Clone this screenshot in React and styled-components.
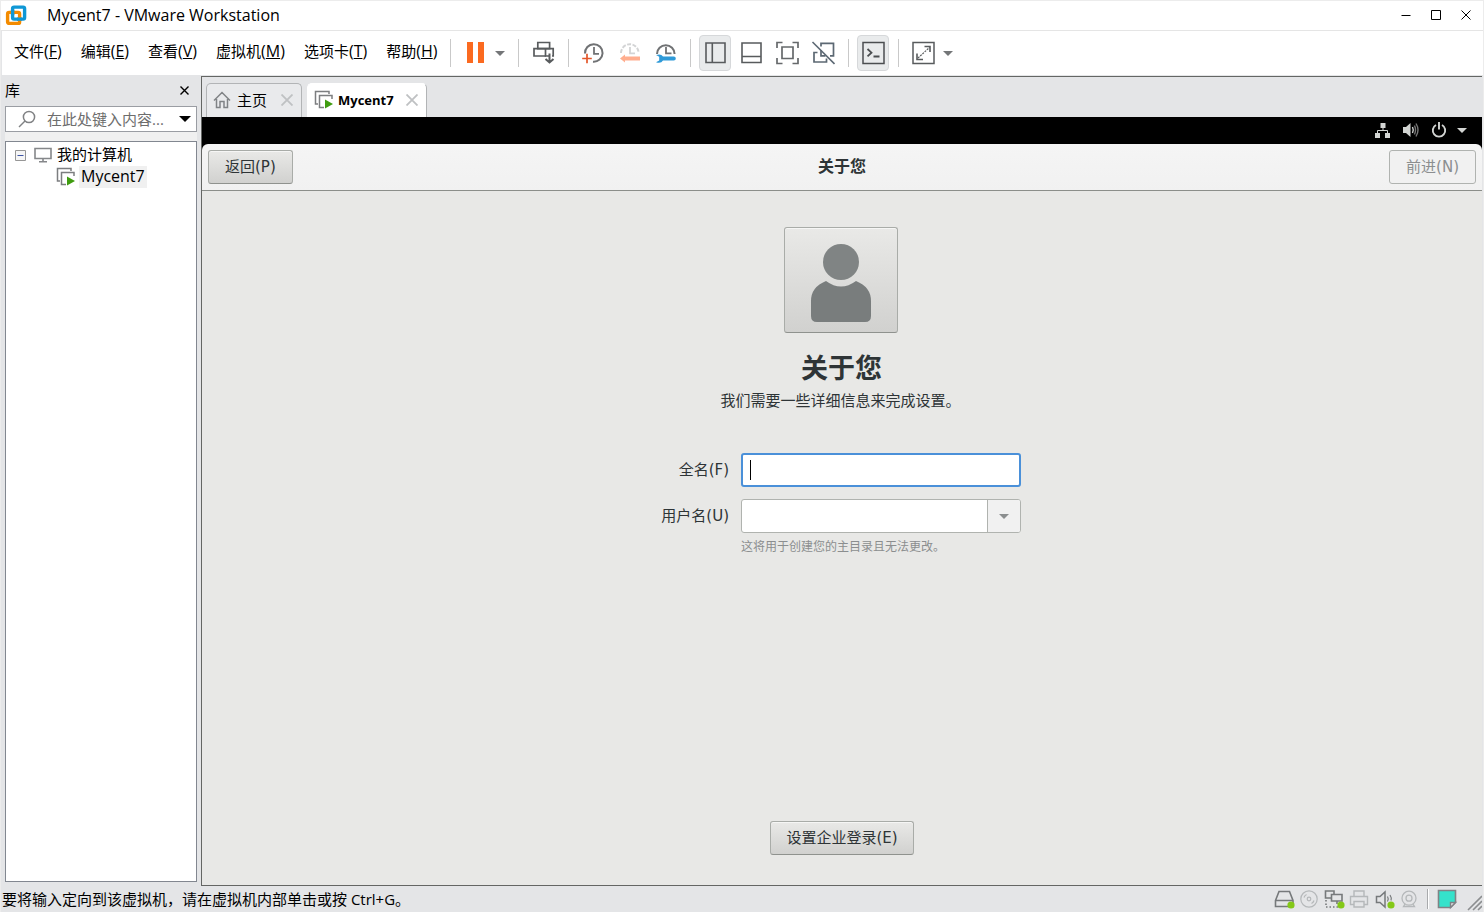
import React from "react";
import styled, { createGlobalStyle } from "styled-components";

const GlobalStyle = createGlobalStyle`
  *, *::before, *::after { box-sizing: border-box; }
  html, body, #root { height: 100%; margin: 0; }
  body {
    background: #e4e5e7;
    color: #000;
    font-family: "Open Sans", "Noto Sans CJK SC", sans-serif;
    font-size: 15px;
    line-height: 20px;
    overflow: hidden;
  }
  button, input { font: inherit; color: inherit; margin: 0; }
  svg { display: block; flex: none; }
`;

const Window = styled.div`
  min-height: 100vh;
  display: flex;
  flex-direction: column;
  border: 1px solid #ececec;
  border-width: 1px 1px 0 1px;
`;

const TitleBar = styled.header`
  display: flex;
  align-items: center;
  height: 30px;
  padding: 0 2px 2px 4px;
  background: #fff;
  border-bottom: 1px solid #e5e5e5;
`;

const WindowTitle = styled.h1`
  flex: 1;
  margin: 0 0 0 20px;
  font-size: 16px;
  font-weight: 400;
`;

const PlainButton = styled.button`
  display: flex;
  align-items: center;
  justify-content: center;
  flex: none;
  padding: 0;
  border: 0;
  background: transparent;
`;

const WindowButton = styled(PlainButton)`
  width: 30px;
  height: 28px;
`;

const MenuBar = styled.div`
  display: flex;
  align-items: center;
  height: 44px;
  margin-left: 1px;
  padding-left: 3px;
  background: #fff;
`;

const Menus = styled.nav`
  display: flex;
  gap: 1px;
  width: 436px;
  padding-bottom: 4px;
`;

const MenuButton = styled(PlainButton)`
  height: 28px;
  padding: 0 9px;
  white-space: nowrap;
`;

const MenuKey = styled.span`
  font-size: 16px;
`;

const Separator = styled.i`
  flex: none;
  width: 1px;
  height: 28px;
  margin: 0 8px 0 9px;
  background: #c9c9c9;
`;

const Tools = styled.div`
  display: flex;
  gap: 4px;
`;

const ToolButton = styled(PlainButton)`
  width: 32px;
  height: 36px;
  border-radius: 4px;
  border: 1px solid ${(p) => (p.$active ? "#d6d8da" : "transparent")};
  background: ${(p) => (p.$active ? "#e9ebec" : "transparent")};
`;

const DropButton = styled(PlainButton)`
  width: 18px;
  height: 36px;
`;

const Body = styled.div`
  flex: 1;
  display: flex;
  padding-right: 1px;
`;

const Sidebar = styled.aside`
  display: flex;
  flex-direction: column;
  width: 200px;
  flex: none;
  padding: 0 4px 4px;
`;

const SidebarHead = styled.div`
  display: flex;
  align-items: center;
  justify-content: space-between;
  height: 31px;
  padding: 0 1px 1px 0;
`;

const SidebarTitle = styled.h2`
  margin: 0;
  font-size: 15px;
  font-weight: 400;
`;

const SmallButton = styled(PlainButton)`
  width: 24px;
  height: 24px;
`;

const SearchOptions = styled(PlainButton)`
  width: 22px;
  height: 24px;
`;

const SidebarContent = styled.div`
  flex: 1;
  display: flex;
  flex-direction: column;
  gap: 9px;
  background: #f0f0f0;
`;

const SearchBox = styled.div`
  display: flex;
  align-items: center;
  height: 26px;
  padding-left: 12px;
  background: #fff;
  border: 1px solid #9a9da3;
`;

const SearchInput = styled.input`
  flex: 1;
  min-width: 0;
  margin-left: 11px;
  padding: 0;
  border: 0;
  outline: 0;
  background: transparent;
  &::placeholder { color: #6d6d6d; opacity: 1; }
`;

const Tree = styled.ul`
  flex: 1;
  margin: 0;
  padding: 2px 0 0 8px;
  list-style: none;
  background: #fff;
  border: 1px solid #828790;
`;

const Branch = styled.ul`
  margin: 0;
  padding: 0 0 0 42px;
  list-style: none;
`;

const TreeRow = styled.div`
  display: flex;
  align-items: center;
  gap: ${(p) => (p.$leaf ? 3 : 2)}px;
  height: 22px;
`;

const TreeLabel = styled.span`
  height: 22px;
  padding: 0 2px;
  font-size: ${(p) => (p.$selected ? 16 : 15)}px;
  background: ${(p) => (p.$selected ? "#f0f0f0" : "transparent")};
`;

const Main = styled.main`
  flex: 1;
  display: flex;
  flex-direction: column;
  margin-top: 1px;
  border: 1px solid #646664;
  border-right: 0;
`;

const TabStrip = styled.div`
  display: flex;
  align-items: flex-end;
  gap: 5px;
  height: 40px;
  padding-left: 4px;
`;

const Tab = styled.div`
  display: flex;
  align-items: center;
  height: 34px;
  padding: 0 2px 2px 6px;
  border: 1px solid ${(p) => (p.$active ? "#fff" : "#b2b4b6")};
  border-right-color: #b2b4b6;
  border-bottom: 0;
  border-radius: 5px 5px 0 0;
  background: ${(p) => (p.$active ? "#fff" : "#e9eaec")};
`;

const TabLabel = styled(PlainButton)`
  gap: ${(p) => (p.$active ? 4 : 6)}px;
  margin-right: ${(p) => (p.$active ? 6 : 8)}px;
  font-size: ${(p) => (p.$active ? 13 : 15)}px;
  font-weight: ${(p) => (p.$active ? 700 : 400)};
`;

const Guest = styled.section`
  flex: 1;
  display: flex;
  flex-direction: column;
  background: #000;
  color: #2e3436;
  font-family: "DejaVu Sans", "Noto Sans CJK SC", sans-serif;
`;

const GuestBar = styled.div`
  display: flex;
  align-items: center;
  justify-content: flex-end;
  height: 27px;
  padding: 0 15px 1px 0;
  gap: 12px;
`;

const PowerMenu = styled.div`
  display: flex;
  align-items: center;
  gap: 10px;
`;

const GuestHeader = styled.div`
  display: grid;
  grid-template-columns: 1fr auto 1fr;
  align-items: center;
  height: 47px;
  padding: 0 6px;
  border-radius: 6px 6px 0 0;
  border-bottom: 1px solid #8b8e8a;
  background: linear-gradient(#f5f5f5, #f1f1f1);
`;

const GuestTitle = styled.h2`
  margin: 0;
  font-size: 16px;
  font-weight: 700;
`;

const GtkButton = styled.button`
  justify-self: ${(p) => p.$side || "auto"};
  height: 34px;
  padding: 0 ${(p) => (p.$side ? 16 : 15)}px;
  font-size: 15px;
  border: 1px solid #a9aca8;
  border-bottom-color: #8f928e;
  border-radius: 3px;
  background: linear-gradient(#e9e9e7, #d1d1cf);
  box-shadow: inset 0 1px #f6f6f5;
  &:disabled {
    color: #8b8e8f;
    border-color: #b0b3b0;
    background: #f1f1f1;
    box-shadow: none;
  }
`;

const Page = styled.div`
  flex: 1;
  display: flex;
  flex-direction: column;
  align-items: center;
  padding: 36px 0 30px;
  background: #e8e8e6;
`;

const AvatarButton = styled(GtkButton)`
  display: flex;
  justify-content: center;
  align-items: center;
  width: 114px;
  height: 106px;
  margin-right: 2px;
  padding: 6px 15px 0;
`;

const Heading = styled.h3`
  margin: 16px 1px 0 0;
  font-size: 27px;
  line-height: 40px;
`;

const Lead = styled.p`
  margin: 2px 3px 42px 0;
`;

const Form = styled.form`
  display: grid;
  grid-template-columns: 68px 280px;
  column-gap: 12px;
  row-gap: 12px;
  align-items: center;
  margin-right: 2px;
`;

const FieldLabel = styled.label`
  justify-self: end;
  white-space: nowrap;
`;

const NameField = styled.div`
  position: relative;
  height: 34px;
`;

const NameInput = styled.input`
  width: 100%;
  height: 34px;
  padding: 0 8px;
  border: 2px solid #4a90d9;
  border-radius: 3px;
  outline: 0;
  background: #fff;
`;

const TextCursor = styled.i`
  position: absolute;
  left: 9px;
  top: 7px;
  width: 1px;
  height: 20px;
  background: #000;
`;

const Combo = styled.div`
  display: flex;
  height: 34px;
  border: 1px solid #b0b3af;
  border-radius: 3px;
  background: #fff;
  overflow: hidden;
`;

const ComboInput = styled.input`
  flex: 1;
  min-width: 0;
  padding: 0 8px;
  border: 0;
  outline: 0;
  background: transparent;
`;

const ComboButton = styled(PlainButton)`
  width: 33px;
  border-left: 1px solid #b0b3af;
  background: #f1f1f1;
`;

const Hint = styled.p`
  grid-column: 2;
  margin: -8px 0 0;
  font-size: 12px;
  color: #8b8e8f;
`;

const EnterpriseButton = styled(GtkButton)`
  margin-top: auto;
`;

const StatusBar = styled.footer`
  display: flex;
  align-items: center;
  height: 26px;
  padding: 0 1px;
`;

const StatusText = styled.span`
  flex: 1;
`;

const Devices = styled.div`
  display: flex;
  gap: 1px;
`;

const DeviceButton = styled(PlainButton)`
  width: 24px;
  height: 24px;
`;

const StatusSeparator = styled.i`
  width: 2px;
  height: 20px;
  margin: 0 6px;
  background: #a8aaac;
  border-right: 1px solid #fff;
`;

const Icon = ({ w = 24, h = 24, children, ...rest }) => (
  <svg width={w} height={h} viewBox={`0 0 ${w} ${h}`} fill="none" aria-hidden="true" {...rest}>
    {children}
  </svg>
);

const Caret = ({ color = "#747678", w = 10, h = 5 }) => (
  <Icon w={w} h={h}>
    <path d={`M0 0H${w}L${w / 2} ${h}Z`} fill={color} />
  </Icon>
);

const VmIcon = () => (
  <Icon w={20} h={20}>
    <path d="M4 14H1.5V1.5H15V4" stroke="#7c7e80" strokeWidth="1.5" />
    <path d="M10 17.5H5.5V5.5H18V9" stroke="#7c7e80" strokeWidth="1.5" />
    <path d="M11 9.5L19 14L11 18.5Z" fill="#3f9c10" />
  </Icon>
);

const Cross = ({ size = 10, color = "#000", width = 1 }) => (
  <Icon w={size} h={size}>
    <path d={`M.5 .5L${size - 0.5} ${size - 0.5}M${size - 0.5} .5L.5 ${size - 0.5}`} stroke={color} strokeWidth={width} />
  </Icon>
);

const dark = "#585b5d";

const icons = {
  pause: (
    <Icon>
      <path d="M4 1h6v21H4zM15 1h6v21h-6z" fill="#fb6a20" />
    </Icon>
  ),
  send: (
    <Icon stroke={dark} strokeWidth="1.7">
      <path d="M6.8 1.5H18.6V7.7H6.8Z" />
      <path d="M15 15H3V7.7H22.2V15H21" />
      <path d="M14.5 7.7V15H18" />
      <path d="M18.5 12.5V21M14.5 18L18.5 21.5L22.5 18" strokeWidth="2" />
    </Icon>
  ),
  snapshot: (
    <Icon>
      <path d="M4 12.5A8.8 8.8 0 1 1 12 20.7" stroke="#707274" strokeWidth="2" />
      <path d="M13 6V12.8H18" stroke="#707274" strokeWidth="1.8" />
      <path d="M6 12.7V22.3M1.2 17.5H10.8" stroke="#e3562a" strokeWidth="1.7" />
    </Icon>
  ),
  revert: (
    <Icon>
      <path d="M4 12A8.8 8.8 0 0 1 21.6 12" stroke="#d3d4d5" strokeWidth="2" strokeDasharray="4 1.5" />
      <path d="M13 6V12.3H18" stroke="#d3d4d5" strokeWidth="1.8" />
      <path d="M3 17.5L8 13.5V15.6H23V19.6H8V21.5Z" fill="#ffae8f" />
    </Icon>
  ),
  manage: (
    <Icon>
      <path d="M4 13A8.8 8.8 0 1 1 21.6 13" stroke="#707274" strokeWidth="2" />
      <path d="M13 6V12.3H18.5" stroke="#707274" strokeWidth="1.8" />
      <path d="M3 14Q8 12.2 10 15.6H20.8A2 2 0 0 1 20.8 19.6H10Q8 23 3 21.3L6.2 19.6V15.7Z" fill="#2f9ad8" />
    </Icon>
  ),
  library: (
    <Icon stroke={dark} strokeWidth="1.6">
      <path d="M3 2H22V21.5H3ZM9.3 2V21.5" />
    </Icon>
  ),
  thumbs: (
    <Icon stroke={dark} strokeWidth="1.6">
      <path d="M3 2H22V21.5H3ZM3 15.5H22" />
    </Icon>
  ),
  fullscreen: (
    <Icon stroke="#66696b" strokeWidth="1.7">
      <path d="M2 7V1.5H7.5M17.5 1.5H23V7M23 17V22.5H17.5M7.5 22.5H2V17" />
      <path d="M7 6H18V17.5H7Z" />
    </Icon>
  ),
  unity: (
    <Icon stroke="#5c6873" strokeWidth="1.7">
      <path d="M6.5 11.5H3V21H15.5V17.5" />
      <path d="M10 5.5V2.3H22.5V14.8H19M10 9V14.8H14.5" />
      <path d="M1.5 1L23.5 23" strokeWidth="1.6" />
    </Icon>
  ),
  console: (
    <Icon stroke="#4b4e50">
      <path d="M2 1.5H23V22.5H2Z" strokeWidth="1.5" />
      <path d="M6.5 8L10.5 11.7L6.5 15.4M12.5 15.5H18.5" strokeWidth="1.8" />
    </Icon>
  ),
  stretch: (
    <Icon stroke={dark}>
      <path d="M2 1.5H23V22.5H2Z" strokeWidth="1.5" />
      <path d="M7 17L18.5 6.5" strokeDasharray="2 1" strokeWidth="1.2" />
      <path d="M13.5 5.5H19V11M6 12.5V18.5H12" strokeWidth="1.6" />
    </Icon>
  ),
};

const Dot = () => <circle cx="19" cy="18" r="3.6" fill="#84c818" />;
const mid = "#76797b";
const pale = "#b5b8ba";

const devices = [
  ["硬盘", <Icon><path d="M3.5 13.5L7 4.5H17.5L21 13.5V19.5H3.5ZM3.5 13.5H21" stroke={mid} strokeWidth="1.6" /><Dot /></Icon>],
  ["光盘", <Icon stroke={pale} strokeWidth="1.2"><circle cx="12" cy="12" r="8.2" /><circle cx="12" cy="12" r="1.8" /><path d="M7 10.5A5 5 0 0 1 9.5 7.5M17 13.5A5 5 0 0 1 14.5 16.5" /></Icon>],
  ["网络适配器", <Icon stroke={mid} strokeWidth="1.6"><path d="M3.5 4H12V11H3.5Z" /><path d="M9.5 7.5H20V14H9.5Z" fill="#e4e5e7" /><path d="M4 13V20H16" strokeDasharray="1.5 2" /><path d="M15 14V17" /><g stroke="none"><Dot /></g></Icon>],
  ["打印机", <Icon stroke={pale} strokeWidth="1.4"><path d="M7 9.5V4H17V9.5M7 17.5H3.5V9.5H20.5V17.5H17" /><path d="M7 14.5H17V20H7Z" /></Icon>],
  ["声卡", <Icon stroke={mid} strokeWidth="1.5"><path d="M4.5 9.5H8L13 5V20L8 15.5H4.5Z" /><path d="M15.5 9.5Q17 12 15.5 14.5M18 8Q20 11 19 13.5" strokeWidth="1.2" /><g stroke="none"><Dot /></g></Icon>],
  ["摄像头", <Icon stroke={pale} strokeWidth="1.3"><circle cx="12" cy="11.2" r="7" /><circle cx="12" cy="11.2" r="3" /><path d="M8 17L6.5 19.5H17.5L16 17" /></Icon>],
];

const menus = [
  ["文件", "F"],
  ["编辑", "E"],
  ["查看", "V"],
  ["虚拟机", "M"],
  ["选项卡", "T"],
  ["帮助", "H"],
];

export default function App() {
  return (
    <Window>
      <GlobalStyle />
      <TitleBar>
        <Icon w={22} h={22}>
          <rect x="7.6" y="3.1" width="12" height="12" rx="1.5" stroke="#0f97d5" strokeWidth="3.4" />
          <rect x="2.6" y="8.4" width="12" height="11" rx="1.5" stroke="#f38b00" strokeWidth="3.4" />
          <path d="M7.6 11V6M12 15.1H17" stroke="#0f97d5" strokeWidth="3.4" />
        </Icon>
        <WindowTitle>Mycent7 - VMware Workstation</WindowTitle>
        <WindowButton aria-label="最小化">
          <Icon w={10} h={10}><path d="M.5 5.5H9.5" stroke="#000" /></Icon>
        </WindowButton>
        <WindowButton aria-label="最大化">
          <Icon w={10} h={10}><path d="M.5 .5H9.5V9.5H.5Z" stroke="#000" /></Icon>
        </WindowButton>
        <WindowButton aria-label="关闭"><Cross /></WindowButton>
      </TitleBar>

      <MenuBar>
        <Menus>
          {menus.map(([name, key]) => (
            <MenuButton key={key}>
              <span>{name}<MenuKey>(<u>{key}</u>)</MenuKey></span>
            </MenuButton>
          ))}
        </Menus>
        <Separator />
        <ToolButton aria-label="挂起">{icons.pause}</ToolButton>
        <DropButton aria-label="电源选项"><Caret /></DropButton>
        <Separator />
        <ToolButton aria-label="发送 Ctrl+Alt+Del">{icons.send}</ToolButton>
        <Separator />
        <Tools>
          <ToolButton aria-label="拍摄快照">{icons.snapshot}</ToolButton>
          <ToolButton aria-label="恢复快照" disabled>{icons.revert}</ToolButton>
          <ToolButton aria-label="管理快照">{icons.manage}</ToolButton>
        </Tools>
        <Separator />
        <Tools>
          <ToolButton aria-label="显示库" $active>{icons.library}</ToolButton>
          <ToolButton aria-label="显示缩略图">{icons.thumbs}</ToolButton>
          <ToolButton aria-label="全屏">{icons.fullscreen}</ToolButton>
          <ToolButton aria-label="Unity 模式">{icons.unity}</ToolButton>
        </Tools>
        <Separator />
        <ToolButton aria-label="控制台视图" $active>{icons.console}</ToolButton>
        <Separator />
        <ToolButton aria-label="自由拉伸">{icons.stretch}</ToolButton>
        <DropButton aria-label="拉伸选项"><Caret /></DropButton>
      </MenuBar>

      <Body>
        <Sidebar>
          <SidebarHead>
            <SidebarTitle>库</SidebarTitle>
            <SmallButton aria-label="关闭库"><Cross size={9} width={1.4} /></SmallButton>
          </SidebarHead>
          <SidebarContent>
            <SearchBox>
              <Icon w={18} h={18} stroke="#808284" strokeWidth="1.5">
                <circle cx="11" cy="7" r="5.6" />
                <path d="M7 11L1 17" />
              </Icon>
              <SearchInput aria-label="搜索库" placeholder="在此处键入内容..." />
              <SearchOptions aria-label="搜索选项"><Caret color="#000" w={12} h={6} /></SearchOptions>
            </SearchBox>
            <Tree>
              <li>
                <TreeRow>
                  <Icon w={12} h={12}>
                    <path d="M1.5 1.5H11.5V11.5H1.5Z" stroke="#969696" fill="#f6f6f6" />
                    <path d="M3.5 6.5H9.5" stroke="#3e55a5" />
                  </Icon>
                  <Icon w={25} h={20}>
                    <path d="M7 3.5H23V13.5H7Z" stroke="#85878a" strokeWidth="1.6" />
                    <path d="M15 14V16.5M11 16.8H19" stroke="#85878a" strokeWidth="1.6" />
                  </Icon>
                  <TreeLabel>我的计算机</TreeLabel>
                </TreeRow>
                <Branch>
                  <li>
                    <TreeRow $leaf>
                      <VmIcon />
                      <TreeLabel $selected>Mycent7</TreeLabel>
                    </TreeRow>
                  </li>
                </Branch>
              </li>
            </Tree>
          </SidebarContent>
        </Sidebar>

        <Main>
          <TabStrip>
            <Tab>
              <TabLabel>
                <Icon w={18} h={18} stroke="#808386" strokeWidth="1.5">
                  <path d="M1 9.5L9 1.5L17 9.5M3.5 8V16.5H7V10.5H11V16.5H14.5V8" />
                </Icon>
                主页
              </TabLabel>
              <SmallButton aria-label="关闭主页"><Cross size={12} color="#bfc1c3" width={1.8} /></SmallButton>
            </Tab>
            <Tab $active>
              <TabLabel $active><VmIcon />Mycent7</TabLabel>
              <SmallButton aria-label="关闭 Mycent7"><Cross size={12} color="#bfc1c3" width={1.8} /></SmallButton>
            </Tab>
          </TabStrip>

          <Guest>
            <GuestBar>
              <Icon w={16} h={16}>
                <path d="M5.5 1H10.5V6H5.5ZM0 11H5V16H0ZM10 11H15V16H10Z" fill="#d3d5d3" />
                <path d="M8 6V8.5M2.5 11V8.5H12.5V11" stroke="#d3d5d3" />
              </Icon>
              <Icon w={16} h={16}>
                <path d="M0 5H3L7.5 1V15L3 11H0Z" fill="#d3d5d3" />
                <path d="M9.5 5Q11 8 9.5 11" stroke="#d3d5d3" strokeWidth="1.4" />
                <path d="M11.5 3.5Q13.5 8 11.5 12.5M13 1.5Q17 8 13 14.5" stroke="#777" strokeWidth="1.4" />
              </Icon>
              <PowerMenu>
                <Icon w={16} h={16}>
                  <path d="M5 3A6.2 6.2 0 1 0 11 3M8 0V7.5" stroke="#d3d5d3" strokeWidth="1.9" />
                </Icon>
                <Caret color="#d3d5d3" w={10} h={5} />
              </PowerMenu>
            </GuestBar>
            <GuestHeader>
              <GtkButton $side="start">返回(P)</GtkButton>
              <GuestTitle>关于您</GuestTitle>
              <GtkButton $side="end" disabled>前进(N)</GtkButton>
            </GuestHeader>
            <Page>
              <AvatarButton aria-label="选择头像">
                <Icon w={64} h={82}>
                  <path d="M17 39Q2 45 2 59V74Q2 80 8 80H56Q62 80 62 74V59Q62 45 47 39Q32 50 17 39Z" fill="#797d7d" />
                  <circle cx="32" cy="20" r="18" fill="#808484" />
                </Icon>
              </AvatarButton>
              <Heading>关于您</Heading>
              <Lead>我们需要一些详细信息来完成设置。</Lead>
              <Form onSubmit={(e) => e.preventDefault()}>
                <FieldLabel htmlFor="fullname">全名(F)</FieldLabel>
                <NameField>
                  <NameInput id="fullname" />
                  <TextCursor />
                </NameField>
                <FieldLabel htmlFor="username">用户名(U)</FieldLabel>
                <Combo>
                  <ComboInput id="username" />
                  <ComboButton type="button" aria-label="用户名建议"><Caret color="#8b8e8f" /></ComboButton>
                </Combo>
                <Hint>这将用于创建您的主目录且无法更改。</Hint>
              </Form>
              <EnterpriseButton>设置企业登录(E)</EnterpriseButton>
            </Page>
          </Guest>
        </Main>
      </Body>

      <StatusBar>
        <StatusText>要将输入定向到该虚拟机，请在虚拟机内部单击或按 Ctrl+G。</StatusText>
        <Devices>
          {devices.map(([name, icon]) => (
            <DeviceButton key={name} aria-label={name}>{icon}</DeviceButton>
          ))}
        </Devices>
        <StatusSeparator />
        <DeviceButton aria-label="消息">
          <Icon>
            <path d="M3.5 3.5H20.5V15.5L15.5 20.5H3.5Z" fill="#35e2cb" stroke="#808386" strokeWidth="1.6" />
            <path d="M20.5 15.5H15.5V20.5Z" fill="#e4e5e7" stroke="#808386" strokeWidth="1.4" />
          </Icon>
        </DeviceButton>
        <Icon w={23} h={24} stroke="#8c8e90" strokeWidth="1.6">
          <path d="M9 23L23 9M14 23L23 14M19 23L23 19" />
        </Icon>
      </StatusBar>
    </Window>
  );
}
